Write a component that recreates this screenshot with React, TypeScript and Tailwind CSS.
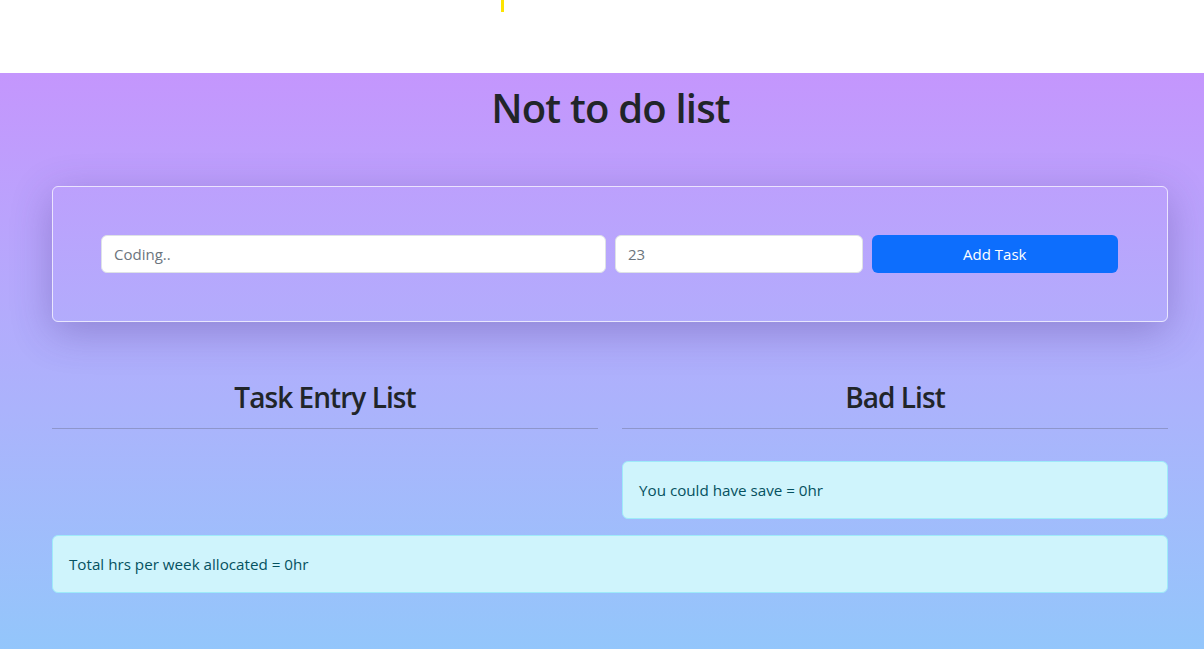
import React from "react";

const font = { fontFamily: '"Open Sans", "Noto Sans", sans-serif' };

export default function App() {
  return (
    <div className="min-h-[649px] bg-white text-[#212529]" style={font}>
      {/* top strip */}
      <div className="h-[73px] bg-white">
        <div className="ml-[501px] h-[12px] w-[3px] bg-[#fde400]" />
      </div>

      <main className="min-h-[576px] bg-gradient-to-b from-[#c496fd] to-[#93c6fb] pb-10">
        <h1 className="pt-[11px] pl-[17px] text-center text-[40px] font-semibold leading-[48px] tracking-[-0.8px]">
          Not to do list
        </h1>

        <div className="ml-[52px] w-[1116px]">
          {/* form card */}
          <div className="mt-[54px] rounded-md border border-white/70 pl-[48px] pr-[49px] pb-[48px] pt-[48px] shadow-[0_10px_40px_rgba(60,40,120,0.3)]">
            <div className="flex gap-[9px]">
              <input
                className="h-[38px] w-[506px] rounded-md border border-[#dee2e6] bg-white px-3 text-[15px] text-[#212529] placeholder:text-[#6c757d] outline-none"
                placeholder="Coding.."
              />
              <input
                className="h-[38px] w-[248px] rounded-md border border-[#dee2e6] bg-white px-3 text-[15px] text-[#212529] placeholder:text-[#6c757d] outline-none"
                placeholder="23"
              />
              <button className="h-[38px] w-[247px] rounded-md bg-[#0d6efd] text-[15px] text-white">
                Add Task
              </button>
            </div>
          </div>

          {/* lists */}
          <div className="mt-[58px] grid grid-cols-2 gap-x-[24px]">
            <div>
              <h2 className="text-center text-[28px] font-semibold leading-[34px] tracking-[-0.95px]">Task Entry List</h2>
              <hr className="mt-[14px] border-t border-[#8e96cc]" />
            </div>
            <div>
              <h2 className="text-center text-[28px] font-semibold leading-[34px] tracking-[-0.95px]">Bad List</h2>
              <hr className="mt-[14px] border-t border-[#8e96cc]" />
              <div className="mt-[32px] rounded-md border border-[#9eeaf9] bg-[#cff4fc] px-4 py-4 text-[15.2px] leading-6 text-[#055160]">
                You could have save = 0hr
              </div>
            </div>
          </div>

          <div className="mt-[16px] rounded-md border border-[#9eeaf9] bg-[#cff4fc] px-4 py-4 text-[15.2px] leading-6 text-[#055160]">
            Total hrs per week allocated = 0hr
          </div>
        </div>
      </main>
    </div>
  );
}
